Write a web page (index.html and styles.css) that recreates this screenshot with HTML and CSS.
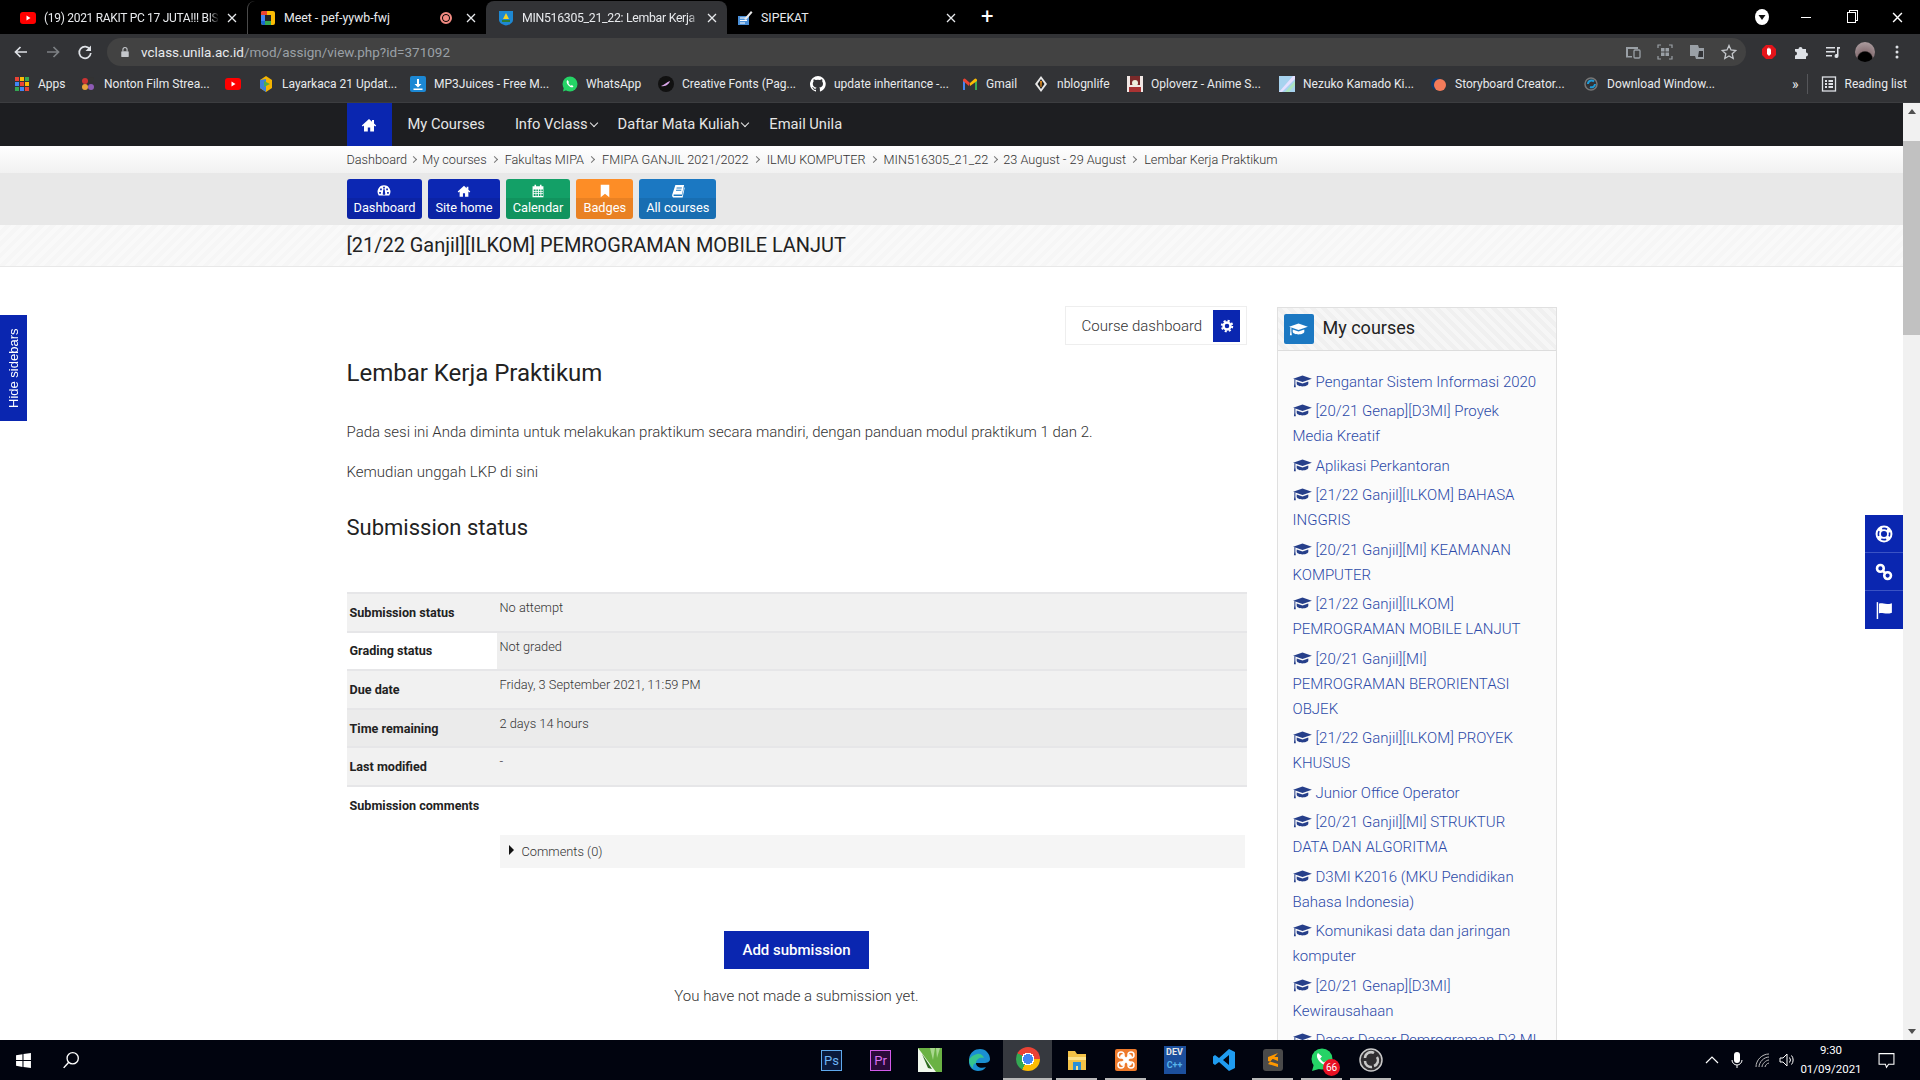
FILE: index.html
```html
<!DOCTYPE html>
<html lang="en">
<head>
    <meta charset="UTF-8">
    <meta name="viewport" content="width=device-width, initial-scale=1.0">
    <title>MIN516305_21_22: Lembar Kerja Praktikum</title>
    <link rel="stylesheet" href="styles.css">
</head>
<body>
    <svg class="icon-defs" width="0" height="0">
        <symbol id="i-home" viewBox="0 0 16 16"><path d="M8 2 .8 8.600l1 1L3 8.600V14.500h3.800v-4h2.400v4H13V8.600l1.200 1 1-1L13 6.600V3h-2v1.800z"/></symbol>
        <symbol id="i-cap" viewBox="0 0 20 16"><path d="M10 1.500 0 5l10 3.600L20 5z"/><path d="M3.800 8v2.500C3.800 12 6.500 13.300 10 13.300s6.200-1.300 6.200-2.800V8L10 10.200z"/><path d="M1.300 5.500h1.100v5l.5 3.500H.8l.5-3.500z"/></symbol>
        <symbol id="i-dash" viewBox="0 0 16 16"><path fill-rule="evenodd" d="M8 1.500a7.300 7.300 0 0 0-6 11.500h12A7.300 7.300 0 0 0 8 1.500zM7 3h2v2H7zM3.500 5h2v2h-2zm7 0h2v2h-2zM2.500 9h2v2h-2zm9 0h2v2h-2zM7.200 6h1.600l.5 4.500a1.400 1.400 0 1 1-2.600 0z"/></symbol>
        <symbol id="i-cal" viewBox="0 0 16 18"><path fill-rule="evenodd" d="M1 3h2.500V1h2v2h5V1h2v2H15v14H1zm1.500 4v2h2.400V7zm3.400 0v2h2V7zm3.200 0v2h2V7zm3.200 0v2h2V7zM2.500 10v2h2.400v-2zm3.400 0v2h2v-2zm3.200 0v2h2v-2zm3.200 0v2h2v-2zM2.500 13v2.500h2.400V13zm3.400 0v2.500h2V13zm3.200 0v2.500h2V13zm3.200 0v2.500h2V13z"/></symbol>
        <symbol id="i-mark" viewBox="0 0 16 18"><path d="M2.500 1h11v16L8 12.500 2.500 17z"/></symbol>
        <symbol id="i-book" viewBox="0 0 16 16"><path fill-rule="evenodd" d="M5 1h10l-2.500 11H3.800c-.8 0-1 .6-.9 1 .1.600.6.800 1 .8h8.800l2.300-10 .6.700L13.300 15.500H3.500C2 15.500 1 14 1.300 12.500zm1.500 3-.3 1.200h6l.3-1.200zm-.6 2.500-.3 1.200h6l.3-1.200z"/></symbol>
        <symbol id="i-link" viewBox="0 0 16 16"><g fill="none" stroke="currentColor" stroke-width="2.300"><circle cx="4.800" cy="4.800" r="3"/><circle cx="11.200" cy="11.200" r="3"/><path d="m6.500 6.500 3 3"/></g></symbol>
        <symbol id="i-flag" viewBox="0 0 16 16"><path d="M1.500 1h1.300v15H1.500z"/><path d="M3.500 2.500C6 1 9 4 15 2v8.500c-5.500 2-9-1-11.500.5z"/></symbol>
        <symbol id="i-ring" viewBox="0 0 16 16"><circle cx="8" cy="8" r="7.500" fill="currentColor"/><circle cx="8" cy="8" r="2.700" fill="#0a26b0"/><circle cx="8" cy="8" r="5" fill="none" stroke="#0a26b0" stroke-width="1.400" stroke-dasharray="4.500 3.354" stroke-dashoffset="2.250"/></symbol>
        <symbol id="i-close" viewBox="0 0 10 10"><path d="m1 1 8 8M9 1 1 9" fill="none" stroke="currentColor" stroke-width="1.300"/></symbol>
    </svg>

    <!-- browser tabs -->
    <div class="tabbar">
        <div class="tab">
            <svg class="fav" viewBox="0 0 16 16"><rect y="2" width="16" height="12" rx="3" fill="#f00"/><path d="m6.500 5.500 4 2.500-4 2.500z" fill="#fff"/></svg>
            <span class="tab-title tab-fade tab-tight">(19) 2021 RAKIT PC 17 JUTA!!! BIS</span>
            <svg class="tab-x"><use href="#i-close"/></svg>
        </div>
        <div class="tab tab-sep">
            <svg class="fav" viewBox="0 0 16 16"><rect x="1" y="1" width="14" height="14" rx="2" fill="#fbbc04"/><path d="M1 3a2 2 0 0 1 2-2h4v4H1z" fill="#ea4335"/><path d="M1 5h4v6H1z" fill="#4285f4"/><path d="M1 11h4v4H3a2 2 0 0 1-2-2z" fill="#1967d2"/><path d="M5 11h6v4H5z" fill="#34a853"/><rect x="5" y="5" width="6" height="6" fill="#202124"/></svg>
            <span class="tab-title">Meet - pef-yywb-fwj</span>
            <span class="rec"></span>
            <svg class="tab-x"><use href="#i-close"/></svg>
        </div>
        <div class="tab tab-active">
            <svg class="fav" viewBox="0 0 16 16"><path d="M1 1h14v9c0 3-4 5-7 5.500C5 15 1 13 1 10z" fill="#1e88d2"/><path d="M8 3 5 9h6z" fill="#f5d327"/><path d="M4 10h8v2H4z" fill="#2e7d32"/></svg>
            <span class="tab-title tab-fade tab-snug">MIN516305_21_22: Lembar Kerja</span>
            <svg class="tab-x"><use href="#i-close"/></svg>
        </div>
        <div class="tab tab-last">
            <svg class="fav" viewBox="0 0 16 16"><path d="M1 6h11v9H1z" fill="#4a90d9"/><path d="M3 8h7M3 10.500h7M3 13h5" stroke="#fff"/><path d="m7 9 7-8 1.500 1.500L9 10z" fill="#e8e8e8"/></svg>
            <span class="tab-title">SIPEKAT</span>
            <svg class="tab-x"><use href="#i-close"/></svg>
        </div>
        <span class="tab-plus">+</span>
        <div class="win-controls">
            <svg class="media-dot" viewBox="0 0 14 16"><ellipse cx="7" cy="8" rx="7" ry="8" fill="#fff"/><path d="M3.500 6h7L7 11z" fill="#111"/></svg>
            <span class="win-min"></span>
            <span class="win-max"></span>
            <svg class="win-x"><use href="#i-close"/></svg>
        </div>
    </div>

    <!-- address bar -->
    <div class="toolbar">
        <svg class="tool-btn" viewBox="0 0 16 16"><path d="M14 8H3M7.500 3 2.500 8l5 5" fill="none" stroke="#dee1e6" stroke-width="1.700"/></svg>
        <svg class="tool-btn" viewBox="0 0 16 16"><path d="M2 8h11M8.500 3l5 5-5 5" fill="none" stroke="#7d8084" stroke-width="1.700"/></svg>
        <svg class="tool-btn" viewBox="0 0 16 16"><path d="M13 5.500A5.800 5.800 0 1 0 13.800 9" fill="none" stroke="#dee1e6" stroke-width="1.700"/><path d="M14 1.500V7H8.500z" fill="#dee1e6"/></svg>
        <div class="omnibox">
            <svg class="lock" viewBox="0 0 12 14"><path d="M3.500 6V4a2.500 2.500 0 0 1 5 0v2" fill="none" stroke="#c4c7cb" stroke-width="1.300"/><rect x="1.500" y="6" width="9" height="7" rx="1" fill="#c4c7cb"/></svg>
            <span class="url">vclass.unila.ac.id<span class="url-path">/mod/assign/view.php?id=371092</span></span>
            <div class="omni-icons">
                <svg viewBox="0 0 16 16"><path d="M1 3h12v2H3v7h4v1.500H1z" fill="#9aa0a6"/><rect x="9" y="6" width="6" height="8" rx="1" fill="none" stroke="#9aa0a6" stroke-width="1.300"/></svg>
                <svg viewBox="0 0 16 16"><path d="M1 4V1h3M12 1h3v3M15 12v3h-3M4 15H1v-3" fill="none" stroke="#9aa0a6" stroke-width="1.200"/><path d="M4 4h3.500v3.500H4zm4.500 0H12v3.500H8.500zM4 8.500h3.500V12H4zm4.500 0H12V12H8.500z" fill="#9aa0a6"/></svg>
                <svg viewBox="0 0 16 16"><path d="M1 1h8l1 3h5v11H7l-1-3H1z" fill="#9aa0a6"/><path d="M10 7h4v6h-5z" fill="#323336"/></svg>
                <svg viewBox="0 0 16 16"><path d="m8 1.500 2 4.500 4.800.500-3.600 3.200 1 4.800L8 12l-4.200 2.500 1-4.800L1.200 6.500 6 6z" fill="none" stroke="#c4c7cb" stroke-width="1.300"/></svg>
            </div>
        </div>
        <div class="ext-icons">
            <svg viewBox="0 0 16 16"><path d="M5 1h6l4 4v6l-4 4H5l-4-4V5z" fill="#e4141a"/><path d="M6 5v5l2 2 2-2V4l-1 2V3.500L8 5V3L7 5V4z" fill="#fff"/></svg>
            <svg viewBox="0 0 16 16"><path d="M2 5h3.500a2 2 0 1 1 4 0H13v3.500a2 2 0 1 1 0 4V15H2v-3.500a2 2 0 1 0 0-4z" fill="#dee1e6"/></svg>
            <svg viewBox="0 0 16 16"><path d="M1 3h9v1.500H1zm0 4h9v1.500H1zm0 4h6v1.500H1zM12 3h3v1.800h-1.500V12a2 2 0 1 1-1.500-1.900z" fill="#dee1e6"/></svg>
            <span class="avatar"></span>
            <svg viewBox="0 0 16 16"><circle cx="8" cy="3" r="1.500" fill="#dee1e6"/><circle cx="8" cy="8" r="1.500" fill="#dee1e6"/><circle cx="8" cy="13" r="1.500" fill="#dee1e6"/></svg>
        </div>
    </div>

    <!-- bookmarks -->
    <div class="bookmarks">
        <a class="bm bm-apps"><svg class="fav" viewBox="0 0 16 16"><path d="M1 1h4v4H1z" fill="#ea4335"/><path d="M6 1h4v4H6z" fill="#fbbc04"/><path d="M11 1h4v4h-4z" fill="#34a853"/><path d="M1 6h4v4H1z" fill="#4285f4"/><path d="M6 6h4v4H6z" fill="#ea4335"/><path d="M11 6h4v4h-4z" fill="#fbbc04"/><path d="M1 11h4v4H1z" fill="#34a853"/><path d="M6 11h4v4H6z" fill="#4285f4"/><path d="M11 11h4v4h-4z" fill="#ea4335"/></svg>Apps</a>
        <a class="bm bm-first"><svg class="fav" viewBox="0 0 16 16"><circle cx="5" cy="5" r="3" fill="#c33"/><circle cx="11" cy="4" r="3" fill="#333"/><circle cx="5" cy="11" r="3" fill="#e9a23b"/><circle cx="11" cy="11" r="3" fill="#8e5bb5"/></svg>Nonton Film Strea...</a>
        <a class="bm bm-yt"><svg class="fav" viewBox="0 0 16 16"><rect y="2" width="16" height="12" rx="3" fill="#f00"/><path d="m6.500 5.500 4 2.500-4 2.500z" fill="#fff"/></svg></a>
        <a class="bm bm-long"><svg class="fav" viewBox="0 0 16 16"><path d="M8 0 14 4v8l-6 4-6-4V4z" fill="#f4b400"/><path d="M8 3 2 4v8l6 4z" fill="#3f7fd9"/><path d="m6 5 6 3-6 3z" fill="#4caf50"/></svg>Layarkaca 21 Updat...</a>
        <a class="bm bm-long"><svg class="fav" viewBox="0 0 16 16"><rect width="16" height="16" rx="2" fill="#1c88d4"/><path d="M7 3h2v5h2.500L8 11.500 4.500 8H7zM3.500 12.500h9V14h-9z" fill="#fff"/></svg>MP3Juices - Free M...</a>
        <a class="bm bm-wa"><svg class="fav" viewBox="0 0 16 16"><circle cx="8" cy="8" r="7.500" fill="#25d366"/><path d="M1 15.500 2 11l3 3z" fill="#25d366"/><path d="M5.500 4c-1.500 1-1 3.500 1 5.500s4 2.500 5 1L10 9l-1.200.8C7.800 9.300 6.800 8 6.400 7L7 6z" fill="#fff"/></svg>WhatsApp</a>
        <a class="bm bm-long"><svg class="fav" viewBox="0 0 16 16"><circle cx="8" cy="8" r="8" fill="#111"/><path d="M3 10c3-1 6-4 9-5-1 3-4 6-9 5z" fill="#d9a6e8"/></svg>Creative Fonts (Pag...</a>
        <a class="bm bm-long"><svg class="fav" viewBox="0 0 16 16"><path fill="#fff" fill-rule="evenodd" d="M8 0a8 8 0 0 0-2.500 15.600c.4.100.5-.2.500-.4v-1.400c-2.200.5-2.700-1-2.700-1-.4-.9-.9-1.200-.9-1.200-.7-.5.1-.5.1-.5.800.1 1.200.8 1.200.8.700 1.200 1.900.9 2.300.7.100-.5.300-.9.500-1.100-1.800-.2-3.700-.9-3.700-4 0-.9.300-1.600.8-2.100-.1-.2-.4-1 .1-2.100 0 0 .7-.2 2.200.8a7.600 7.600 0 0 1 4 0c1.500-1 2.200-.8 2.200-.8.400 1.100.2 1.900.1 2.100.5.600.8 1.300.8 2.100 0 3.100-1.900 3.700-3.700 3.900.3.300.6.800.6 1.500v2.200c0 .2.100.5.600.4A8 8 0 0 0 8 0z"/></svg>update inheritance -...</a>
        <a class="bm bm-gmail"><svg class="fav" viewBox="0 0 16 16"><path d="M1 14V4l2 1v9z" fill="#4285f4"/><path d="M13 14V5l2-1v10z" fill="#34a853"/><path d="M1 4a1.500 1.500 0 0 1 2.500-1L8 7l-1 3L1 5z" fill="#ea4335"/><path d="M15 4a1.500 1.500 0 0 0-2.500-1L8 7v3l7-5z" fill="#fbbc04"/></svg>Gmail</a>
        <a class="bm bm-nb"><svg class="fav" viewBox="0 0 16 16"><path d="m8 0 6 8-6 8-6-8z" fill="#e8e8e8"/><path d="m8 3 3.500 5L8 13 4.500 8z" fill="#222"/><path d="M7 5h2l-.5 6h-1z" fill="#e08a1e"/></svg>nblognlife</a>
        <a class="bm bm-long"><svg class="fav" viewBox="0 0 16 16"><rect width="16" height="16" fill="#f1e7e4"/><path d="M3 0h10v9H3z" fill="#7a2a2a"/><circle cx="8" cy="7" r="3" fill="#eed"/><path d="M2 11h12v5H2z" fill="#a33"/></svg>Oploverz - Anime S...</a>
        <a class="bm bm-long"><svg class="fav" viewBox="0 0 16 16"><rect width="16" height="16" fill="#a7d3ef"/><path d="M0 16 14 0h2v3L3 16z" fill="#e6e0ff"/><path d="M6 16 16 5v4l-6 7z" fill="#ace5bd"/></svg>Nezuko Kamado Ki...</a>
        <a class="bm bm-long"><svg class="fav" viewBox="0 0 16 16"><circle cx="6" cy="8" r="6" fill="#123a6b"/><circle cx="9" cy="9" r="6" fill="#f37b5a"/></svg>Storyboard Creator...</a>
        <a class="bm bm-long"><svg class="fav" viewBox="0 0 16 16"><circle cx="8" cy="8" r="6" fill="none" stroke="#777" stroke-width="1.500"/><path d="M5 8a3.500 3.500 0 0 1 6-2.500M12 8a3.500 3.500 0 0 1-5 3" fill="none" stroke="#1e9bd7" stroke-width="2"/></svg>Download Window...</a>
        <span class="bm-more">»</span>
        <a class="bm bm-read"><svg class="fav" viewBox="0 0 16 16"><rect x="1.500" y="1" width="13" height="14" fill="none" stroke="#dee1e6" stroke-width="1.300"/><path d="M4 4h2v2H4zm3.500 0H12v2H7.500zM4 7h2v2H4zm3.500 0H12v2H7.500zM4 10h2v2H4zm3.500 0H12v2H7.500z" fill="#dee1e6"/></svg>Reading list</a>
    </div>

    <div class="viewport">
        <div class="page">
            <nav class="topnav">
                <div class="container topnav-in">
                    <a class="nav-home"><svg class="ic"><use href="#i-home"/></svg></a>
                    <a class="nav-link nav-courses">My Courses</a>
                    <a class="nav-link nav-info">Info Vclass<span class="chev"></span></a>
                    <a class="nav-link nav-mk">Daftar Mata Kuliah<span class="chev"></span></a>
                    <a class="nav-link">Email Unila</a>
                </div>
            </nav>

            <div class="crumbs">
                <div class="container crumbs-in">
                    <a>Dashboard</a><i class="short"></i><a>My courses</a><i></i><a>Fakultas MIPA</a><i></i><a>FMIPA GANJIL 2021/2022</a><i></i><a>ILMU KOMPUTER</a><i></i><a>MIN516305_21_22</a><i class="short"></i><a>23 August - 29 August</a><i></i><a>Lembar Kerja Praktikum</a>
                </div>
            </div>

            <div class="quick">
                <div class="container quick-in">
                    <a class="qbtn q-blue"><span class="q-top"><svg class="ic"><use href="#i-dash"/></svg></span><span class="q-label">Dashboard</span></a>
                    <a class="qbtn q-blue"><span class="q-top"><svg class="ic"><use href="#i-home"/></svg></span><span class="q-label">Site home</span></a>
                    <a class="qbtn q-green"><span class="q-top"><svg class="ic"><use href="#i-cal"/></svg></span><span class="q-label">Calendar</span></a>
                    <a class="qbtn q-orange"><span class="q-top"><svg class="ic"><use href="#i-mark"/></svg></span><span class="q-label">Badges</span></a>
                    <a class="qbtn q-sky"><span class="q-top"><svg class="ic"><use href="#i-book"/></svg></span><span class="q-label">All courses</span></a>
                </div>
            </div>

            <div class="course-head">
                <div class="container"><h1>[21/22 Ganjil][ILKOM] PEMROGRAMAN MOBILE LANJUT</h1></div>
            </div>

            <div class="container layout">
                <main>
                    <div class="course-menu">
                        <div class="course-menu-box">
                            <span>Course dashboard</span>
                            <a class="gear-btn"><svg viewBox="0 0 16 16"><circle cx="8" cy="8" r="4" fill="none" stroke="#fff" stroke-width="2.800"/><circle cx="8" cy="8" r="6" fill="none" stroke="#fff" stroke-width="2.200" stroke-dasharray="2.400 2.310"/></svg></a>
                        </div>
                    </div>
                    <h2>Lembar Kerja Praktikum</h2>
                    <p class="intro">Pada sesi ini Anda diminta untuk melakukan praktikum secara mandiri, dengan panduan modul praktikum 1 dan 2.</p>
                    <p class="intro">Kemudian unggah LKP di sini</p>
                    <h3>Submission status</h3>

                    <table class="status">
                        <tr class="row-odd"><th>Submission status</th><td>No attempt</td></tr>
                        <tr class="row-even"><th>Grading status</th><td>Not graded</td></tr>
                        <tr class="row-odd"><th>Due date</th><td>Friday, 3 September 2021, 11:59 PM</td></tr>
                        <tr class="row-hover"><th>Time remaining</th><td>2 days 14 hours</td></tr>
                        <tr class="row-odd"><th>Last modified</th><td>-</td></tr>
                        <tr class="row-plain">
                            <th>Submission comments</th>
                            <td><div class="comments"><span class="tri"></span>Comments (0)</div></td>
                        </tr>
                    </table>

                    <div class="submit">
                        <a class="submit-btn">Add submission</a>
                        <p>You have not made a submission yet.</p>
                    </div>
                </main>

                <aside class="block">
                    <div class="block-head">
                        <span class="block-icon"><svg class="ic"><use href="#i-cap"/></svg></span>
                        <span class="block-title">My courses</span>
                    </div>
                    <ul class="course-list">
                        <li><svg class="ic"><use href="#i-cap"/></svg>Pengantar Sistem Informasi 2020</li>
                        <li><svg class="ic"><use href="#i-cap"/></svg>[20/21 Genap][D3MI] Proyek Media Kreatif</li>
                        <li><svg class="ic"><use href="#i-cap"/></svg>Aplikasi Perkantoran</li>
                        <li><svg class="ic"><use href="#i-cap"/></svg>[21/22 Ganjil][ILKOM] BAHASA INGGRIS</li>
                        <li><svg class="ic"><use href="#i-cap"/></svg>[20/21 Ganjil][MI] KEAMANAN KOMPUTER</li>
                        <li><svg class="ic"><use href="#i-cap"/></svg>[21/22 Ganjil][ILKOM] PEMROGRAMAN MOBILE LANJUT</li>
                        <li><svg class="ic"><use href="#i-cap"/></svg>[20/21 Ganjil][MI] PEMROGRAMAN BERORIENTASI OBJEK</li>
                        <li><svg class="ic"><use href="#i-cap"/></svg>[21/22 Ganjil][ILKOM] PROYEK KHUSUS</li>
                        <li><svg class="ic"><use href="#i-cap"/></svg>Junior Office Operator</li>
                        <li><svg class="ic"><use href="#i-cap"/></svg>[20/21 Ganjil][MI] STRUKTUR DATA DAN ALGORITMA</li>
                        <li><svg class="ic"><use href="#i-cap"/></svg>D3MI K2016 (MKU Pendidikan Bahasa Indonesia)</li>
                        <li><svg class="ic"><use href="#i-cap"/></svg>Komunikasi data dan jaringan komputer</li>
                        <li><svg class="ic"><use href="#i-cap"/></svg>[20/21 Genap][D3MI] Kewirausahaan</li>
                        <li><svg class="ic"><use href="#i-cap"/></svg>Dasar Dasar Pemrograman D3 MI</li>
                    </ul>
                </aside>
            </div>

            <a class="hide-tab">Hide sidebars</a>
            <div class="dock">
                <a><svg class="ic"><use href="#i-ring"/></svg></a>
                <a><svg class="ic"><use href="#i-link"/></svg></a>
                <a><svg class="ic"><use href="#i-flag"/></svg></a>
            </div>
        </div>

        <div class="scrollbar">
            <span class="sb-up"></span>
            <div class="sb-track"><span class="sb-thumb"></span></div>
            <span class="sb-down"></span>
        </div>
    </div>

    <!-- windows taskbar -->
    <div class="taskbar">
        <svg class="start" viewBox="0 0 16 16"><path d="m1 3 6-1v5.500H1zm7-1.200L15 1v6.500H8zM1 8.500h6V14l-6-1zm7 0h7V15l-7-1z" fill="#fff"/></svg>
        <svg class="search" viewBox="0 0 16 16"><circle cx="9.500" cy="6.500" r="5" fill="none" stroke="#fff" stroke-width="1.200"/><path d="m6 10-4.500 5" stroke="#fff" stroke-width="1.300"/></svg>

        <div class="apps">
            <span class="app"><span class="adobe adobe-ps">Ps</span></span>
            <span class="app"><span class="adobe adobe-pr">Pr</span></span>
            <span class="app"><svg viewBox="0 0 24 24"><rect x="0" y="0" width="24" height="24" fill="#6ab244"/><path d="M0 0 18 24H0z" fill="#fff" opacity=".9"/><path d="M12 0l3 12 2-12zM18 0l1 10 3-10z" fill="#a9d88e"/><path d="M4 6l10 15-4-1z" fill="#2c6b1e"/></svg></span>
            <span class="app"><svg viewBox="0 0 24 24"><path d="M2 11C3 4 8 1 13 1c6 0 10 5 10 10 0 3-3 4-6 4H9c0 4 5 6 10 4-2 3-5 4-8 4-5 0-9-4-9-9z" fill="#1a8fd1"/><path d="M9 15c0-4 4-6 8-5-1-3-4-5-7-4C6 7 3 9 2 12c0 3 2 7 5 9-2-2-1-5 2-6z" fill="#36c58e"/></svg></span>
            <span class="app app-on"><span class="chrome-ic"></span></span>
            <span class="app app-run"><svg viewBox="0 0 24 24"><path d="M3 3h7l2 3h9v16H3z" fill="#f3c247"/><path d="M3 9h18v3H3z" fill="#fde28a"/><path d="M8 14h8v8H8z" fill="#2a8fd8"/><path d="M11 18h2v4h-2z" fill="#fde28a"/></svg></span>
            <span class="app app-run"><svg viewBox="0 0 24 24"><rect x="1" y="1" width="22" height="22" rx="2" fill="#ee7a2b"/><path d="M12 12 7 7m5 5 5-5m-5 5-5 5m5-5 5 5" stroke="#fff" stroke-width="3.500"/><circle cx="7" cy="7" r="3" fill="none" stroke="#fff" stroke-width="1.500"/><circle cx="17" cy="7" r="3" fill="none" stroke="#fff" stroke-width="1.500"/><circle cx="7" cy="17" r="3" fill="none" stroke="#fff" stroke-width="1.500"/><circle cx="17" cy="17" r="3" fill="none" stroke="#fff" stroke-width="1.500"/></svg></span>
            <span class="app"><span class="dev-ic"><b>DEV</b><b class="dev-plus">C++</b></span></span>
            <span class="app"><svg viewBox="0 0 24 24"><path d="M17 1 23 4v16l-6 3L7 14l-4 3-2-1.500V8.500L3 7l4 3zM17 7l-6 5 6 5z" fill="#1f9cf0"/></svg></span>
            <span class="app app-run"><svg viewBox="0 0 24 24"><rect x="2" y="1" width="20" height="22" rx="3" fill="#4a4a4a"/><path d="M17 5 7 9v4l10 3v3L7 16M7 9l10 4V9z" fill="#ff9800"/></svg></span>
            <span class="app app-run app-wa"><svg viewBox="0 0 24 24"><circle cx="12" cy="11" r="10.500" fill="#25d366"/><path d="M2 23 4 16l5 5z" fill="#25d366"/><path d="M8 5C6 7 7 11 10 14s6.500 4 8.500 2L16 13l-2 1.500c-1.500-.8-3-2.500-3.800-4L12 8.500z" fill="#fff"/></svg><span class="wa-badge">66</span></span>
            <span class="app app-run"><svg viewBox="0 0 24 24"><circle cx="12" cy="12" r="11" fill="#302e31" stroke="#c9c9c9" stroke-width="1.500"/><path d="M6 10a6 6 0 0 1 9-5M18 9a6 6 0 0 1-3 9M13 19a6 6 0 0 1-7-6" fill="none" stroke="#c9c9c9" stroke-width="2.500"/></svg></span>
        </div>

        <div class="tray">
            <svg viewBox="0 0 16 16"><path d="m2 11 6-6 6 6" fill="none" stroke="#fff" stroke-width="1.200"/></svg>
            <svg viewBox="0 0 16 16"><rect x="5" y="0" width="6" height="11" rx="3" fill="#fff"/><path d="M3 8a5 5 0 0 0 10 0M8 13v3" fill="none" stroke="#fff"/></svg>
            <svg viewBox="0 0 16 16"><path d="M2 15C2 8 8 2 15 2M5 15c0-5 5-10 10-10M8 15c0-3 4-7 7-7M11 15c0-1 2-4 4-4" fill="none" stroke="#bbb"/></svg>
            <svg viewBox="0 0 16 16"><path d="M1 6h3l4-4v12l-4-4H1z" fill="none" stroke="#fff"/><path d="M10.500 5.500a4 4 0 0 1 0 5M12.500 3.500a7 7 0 0 1 0 9" fill="none" stroke="#fff"/></svg>
        </div>
        <div class="clock"><span>9:30</span><span>01/09/2021</span></div>
        <svg class="notif" viewBox="0 0 16 16"><path d="M1 1.500h14v10h-5l-2 3-1-3H1z" fill="none" stroke="#fff"/></svg>
    </div>
</body>
</html>
```

FILE: styles.css
```css
/* page frame */
* {
    box-sizing: border-box;
}

html, body {
    height: 100%;
}

body {
    margin: 0;
    display: flex;
    flex-direction: column;
    overflow: hidden;
    font-family: Roboto, "Liberation Sans", sans-serif;
    font-size: 14px;
    color: #333;
    background-color: #fff;
}

.icon-defs {
    position: absolute;
}

.ic {
    width: 14px;
    height: 14px;
    fill: currentColor;
}

.fav {
    flex: none;
    width: 16px;
    height: 16px;
}

/* browser tabs */
.tabbar {
    flex: none;
    display: flex;
    align-items: flex-end;
    height: 34px;
    padding-left: 8px;
    background-color: #000;
    color: #e8eaed;
    font-size: 12.300px;
}

.tab {
    display: flex;
    align-items: center;
    width: 239px;
    height: 33px;
    padding: 0 10px 0 12px;
    gap: 8px;
    border-radius: 8px 8px 0 0;
}

.tab-sep {
    border-left: 1px solid #4a4a4a;
}

.tab-active {
    width: 241px;
    background-color: #323336;
}

.tab-last {
    padding-left: 10px;
}

.tab-title {
    flex: 1;
    overflow: hidden;
    white-space: nowrap;
}

.tab-fade {
    -webkit-mask-image: linear-gradient(to right, #000 calc(100% - 10px), transparent);
    mask-image: linear-gradient(to right, #000 calc(100% - 10px), transparent);
}

.tab-tight {
    font-size: 12px;
    letter-spacing: -0.3px;
}

.tab-snug {
    letter-spacing: -0.3px;
}

.tab-x {
    flex: none;
    width: 10px;
    height: 10px;
    color: #e8eaed;
}

.rec {
    flex: none;
    width: 12px;
    height: 12px;
    margin-right: 6px;
    border-radius: 50%;
    border: 2px solid #f28b82;
    background-color: #f28b82;
    box-shadow: inset 0 0 0 1px #000;
}

.tab-plus {
    margin: 0 0 5px 15px;
    font-size: 22px;
    line-height: 24px;
    color: #fff;
}

.win-controls {
    display: flex;
    align-items: center;
    height: 34px;
    margin-left: auto;
    padding-right: 17px;
}

.media-dot {
    width: 14px;
    height: 16px;
    margin-right: 32px;
}

.win-min {
    width: 10px;
    height: 1px;
    margin-right: 36px;
    background-color: #fff;
}

.win-max {
    width: 9px;
    height: 11px;
    margin-right: 36px;
    border: 1px solid #fff;
    box-shadow: 2px -2px 0 -1px #000, 2px -2px 0 0 #fff;
}

.win-x {
    width: 11px;
    height: 11px;
    color: #fff;
}

/* address bar */
.toolbar {
    flex: none;
    display: flex;
    align-items: center;
    height: 34px;
    padding: 2px 0 0 13px;
    background-color: #323336;
}

.tool-btn {
    width: 16px;
    height: 16px;
    margin-right: 16px;
}

.tool-btn:nth-child(3) {
    margin-right: 14px;
}

.omnibox {
    display: flex;
    align-items: center;
    width: 1639px;
    height: 28px;
    padding: 0 9px 0 13px;
    border-radius: 14px;
    background-color: #424242;
    color: #e8eaed;
}

.lock {
    width: 10px;
    height: 12px;
    margin-right: 11px;
}

.url {
    font-size: 13.500px;
}

.url-path {
    color: #9aa0a6;
}

.omni-icons {
    display: flex;
    gap: 16px;
    margin-left: auto;
}

.omni-icons svg {
    width: 16px;
    height: 16px;
}

.ext-icons {
    display: flex;
    align-items: center;
    gap: 16px;
    margin-left: 15px;
}

.ext-icons svg {
    width: 16px;
    height: 16px;
}

.avatar {
    width: 20px;
    height: 20px;
    margin: 0 -2px;
    border-radius: 50%;
    background: radial-gradient(circle at 50% 85%, #000 35%, #8a7478 42%, #b5a8aa 100%);
}

/* bookmarks */
.bookmarks {
    flex: none;
    display: flex;
    align-items: center;
    height: 35px;
    padding: 0 0 3px 14px;
    background-color: #323336;
    border-bottom: 1px solid #3c3d40;
    color: #e8eaed;
    font-size: 12px;
}

.bm {
    display: flex;
    align-items: center;
    gap: 8px;
    white-space: nowrap;
    overflow: hidden;
}

.bm-apps {
    width: 66px;
}

.bm-first {
    width: 145px;
}

.bm-long {
    width: 152px;
}

.bm-yt {
    width: 33px;
}

.bm-wa {
    width: 96px;
}

.bm-gmail {
    width: 71px;
}

.bm-nb {
    width: 94px;
}

.bm-more {
    margin-left: 57px;
    padding-right: 8px;
    border-right: 1px solid #55565a;
    font-size: 14px;
    line-height: 20px;
}

.bm-read {
    margin-left: 13px;
}

/* page */
.viewport {
    flex: 1;
    display: flex;
    min-height: 0;
}

.page {
    position: relative;
    flex: 1;
    min-width: 0;
    overflow: hidden;
}

.container {
    width: 1210px;
    margin: 0 auto;
}

.scrollbar {
    flex: none;
    display: flex;
    flex-direction: column;
    width: 17px;
    background-color: #f1f1f1;
}

.sb-track {
    flex: 1;
    padding-top: 21px;
}

.sb-thumb {
    display: block;
    height: 194px;
    background-color: #c1c1c1;
}

.sb-up, .sb-down {
    align-self: center;
    width: 0;
    height: 0;
    margin: 6px 0;
    border-left: 4px solid transparent;
    border-right: 4px solid transparent;
}

.sb-up {
    border-bottom: 5px solid #505050;
}

.sb-down {
    border-top: 5px solid #505050;
}

/* top nav */
.topnav {
    height: 43px;
    background-color: #1d1e21;
    color: #e6e6e6;
    font-size: 14.700px;
}

.topnav-in {
    display: flex;
    align-items: center;
    height: 43px;
}

.nav-link {
    padding-bottom: 1px;
}

.nav-home {
    display: flex;
    align-items: center;
    justify-content: center;
    width: 45px;
    height: 43px;
    margin-right: 16px;
    background-color: #0a26b0;
    color: #fff;
}

.nav-home .ic {
    width: 16px;
    height: 16px;
}

.nav-courses {
    margin-right: 30px;
}

.nav-info {
    margin-right: 20px;
}

.nav-mk {
    margin-right: 20px;
}

.chev {
    display: inline-block;
    width: 6px;
    height: 6px;
    margin: 0 1px 3px 3px;
    border-right: 1px solid #e6e6e6;
    border-bottom: 1px solid #e6e6e6;
    transform: rotate(45deg);
}

/* breadcrumb */
.crumbs {
    height: 27px;
    background: linear-gradient(#fff, #f1f1f1);
    font-size: 12.700px;
    font-weight: 300;
    color: #333;
}

.crumbs-in {
    display: flex;
    align-items: center;
    height: 27px;
}

.crumbs i {
    width: 5px;
    height: 5px;
    margin: 0 8px 0 5px;
    border-top: 1px solid #777;
    border-right: 1px solid #777;
    transform: rotate(45deg);
}

.crumbs .short {
    margin: 0 6px 0 4px;
}

/* quick links */
.quick {
    height: 52px;
    background-color: #e8e8e8;
}

.quick-in {
    display: flex;
    gap: 6px;
    padding-top: 6px;
}

.qbtn {
    display: flex;
    flex-direction: column;
    height: 40px;
    border-radius: 3px;
    overflow: hidden;
    color: #fff;
    font-size: 12.800px;
    text-align: center;
}

.q-top {
    height: 19px;
    padding-top: 5px;
}

.q-label {
    flex: 1;
    padding: 0 7px;
    line-height: 20px;
    background-color: rgba(0, 0, 0, 0.08);
}

.q-blue {
    background-color: #0c27b3;
}

.q-green {
    background-color: #13a067;
}

.q-orange {
    background-color: #fd8d26;
}

.q-sky {
    background-color: #1b78c2;
}

/* course title band */
.course-head {
    height: 42px;
    border-bottom: 1px solid #e8e8e8;
    background: repeating-linear-gradient(135deg, #f9f9f9 0, #f9f9f9 4px, #f6f6f6 4px, #f6f6f6 8px);
}

.course-head h1 {
    margin: 0;
    font-size: 19.950px;
    font-weight: 400;
    line-height: 40px;
    color: #222;
}

/* two columns */
.layout {
    display: grid;
    grid-template-columns: 900px 280px;
    gap: 30px;
    padding-top: 39px;
}

.course-menu {
    display: flex;
    justify-content: flex-end;
}

.course-menu-box {
    display: flex;
    align-items: center;
    gap: 11px;
    width: 182px;
    height: 39px;
    padding: 0 5px 0 16px;
    border: 1px solid #eee;
    font-size: 15px;
    font-weight: 300;
    color: #333;
}

.gear-btn {
    display: flex;
    flex: none;
    align-items: center;
    justify-content: center;
    width: 27px;
    height: 32px;
    background-color: #0a26b0;
}

.gear-btn svg {
    width: 14px;
    height: 14px;
}

main h2 {
    margin: 14px 0 35px;
    font-size: 24px;
    font-weight: 400;
    line-height: 28px;
    color: #222;
}

.intro {
    margin: 0 0 19px;
    font-size: 15px;
    font-weight: 300;
    line-height: 21px;
}

main h3 {
    margin: 32px 0 51px;
    font-size: 22px;
    font-weight: 400;
    line-height: 26px;
    color: #222;
}

/* submission table */
.status {
    width: 900px;
    border-collapse: collapse;
    font-size: 12.800px;
}

.status tr {
    height: 38.600px;
    border-top: 2px solid #e6e6e8;
}

.status th {
    width: 150px;
    padding: 0 3px;
    text-align: left;
    font-size: 12.600px;
    font-weight: 700;
    color: #222;
}

.status td {
    padding: 6px 3px 4px;
    vertical-align: top;
    font-weight: 300;
    color: #333;
}

.row-odd th, .row-odd td {
    background-color: #f1f1f1;
}

.row-even td {
    background-color: #eeeeee;
}

.row-hover th, .row-hover td {
    background-color: #ebebeb;
}

.status .row-plain {
    vertical-align: top;
}

.status .row-plain th {
    padding-top: 11px;
}

.status .row-plain td {
    padding: 48px 2px 0 3px;
}

.comments {
    position: relative;
    display: flex;
    align-items: center;
    height: 33px;
    padding-left: 22px;
    background-color: #f5f5f5;
}

.tri {
    position: absolute;
    left: 9px;
    top: 10px;
    border-top: 5px solid transparent;
    border-bottom: 5px solid transparent;
    border-left: 5px solid #111;
}

.submit {
    padding-top: 63px;
    text-align: center;
}

.submit-btn {
    display: inline-block;
    width: 145px;
    height: 38px;
    background-color: #0a26b0;
    color: #fff;
    font-size: 15px;
    font-weight: 500;
    line-height: 38px;
}

.submit p {
    margin: 18px 0 0;
    font-size: 15px;
    font-weight: 300;
}

/* my courses block */
.block {
    align-self: start;
    margin-top: 1px;
    padding-bottom: 40px;
    border: 1px solid #e0e0e0;
    background-color: #fbfbfb;
}

.block-head {
    display: flex;
    align-items: center;
    gap: 9px;
    height: 43px;
    padding-left: 6px;
    border-bottom: 1px solid #ddd;
    background: repeating-linear-gradient(45deg, #f6f6f6 0, #f6f6f6 4px, #f0f0f0 4px, #f0f0f0 8px);
    font-size: 18px;
    color: #222;
}

.block-title {
    padding-bottom: 3px;
}

.block-icon {
    display: flex;
    align-items: center;
    justify-content: center;
    width: 30px;
    height: 30px;
    border-radius: 2px;
    background-color: #1b78c2;
    color: #fff;
}

.block-icon .ic {
    width: 19px;
    height: 15px;
}

.course-list {
    margin: 0;
    padding: 18.500px 15px 0;
    list-style-type: none;
    font-size: 15px;
    font-weight: 300;
    line-height: 25px;
    color: #2c4aa8;
}

.course-list li {
    margin-bottom: 4.500px;
}

.course-list .ic {
    width: 19px;
    height: 15px;
    margin-right: 4px;
    vertical-align: -2px;
    color: #263f8a;
}

/* overlays on the page */
.hide-tab {
    position: absolute;
    left: 0;
    top: 212px;
    display: flex;
    align-items: center;
    justify-content: center;
    width: 27px;
    height: 106px;
    background-color: #0a26b0;
    color: #fff;
    font-family: "Liberation Sans", sans-serif;
    font-size: 13px;
    writing-mode: vertical-rl;
    transform: rotate(180deg);
}

.dock {
    position: absolute;
    right: 0;
    top: 412px;
    display: flex;
    flex-direction: column;
    width: 38px;
    background-color: #0a26b0;
    color: #fff;
}

.dock a {
    display: flex;
    align-items: center;
    justify-content: center;
    height: 38px;
    border-bottom: 1px solid #3a52c4;
}

.dock a:last-child {
    border-bottom: none;
}

.dock .ic {
    width: 18px;
    height: 18px;
}

/* taskbar */
.taskbar {
    flex: none;
    display: flex;
    align-items: center;
    height: 40px;
    background-color: #01040f;
    color: #fff;
}

.start {
    width: 17px;
    height: 17px;
    margin-left: 15px;
}

.search {
    width: 18px;
    height: 18px;
    margin-left: 30px;
}

.apps {
    display: flex;
    margin-left: 727px;
}

.app {
    position: relative;
    display: flex;
    align-items: center;
    justify-content: center;
    width: 49px;
    height: 40px;
}

.app svg {
    width: 24px;
    height: 24px;
}

.app-on {
    background-color: #36393f;
    border-bottom: 2px solid #b8b8b8;
}

.app-run::after {
    content: "";
    position: absolute;
    left: 4px;
    right: 4px;
    bottom: 0;
    height: 2px;
    background-color: #b8b8b8;
}

.adobe {
    display: block;
    width: 21px;
    height: 21px;
    border: 1px solid;
    font-size: 13px;
    line-height: 19px;
    text-align: center;
}

.adobe-ps {
    border-color: #5fa9ec;
    background-color: #0a1a3c;
    color: #6db5f5;
}

.adobe-pr {
    border-color: #d25ae8;
    background-color: #2a0a3a;
    color: #d970f0;
}

.chrome-ic {
    width: 24px;
    height: 24px;
    border-radius: 50%;
    background:
        radial-gradient(circle, #4285f4 0 5px, #fff 5px 6.500px, transparent 6.500px),
        conic-gradient(#ea4335 0 90deg, #fbbc04 90deg 210deg, #34a853 210deg 300deg, #ea4335 300deg);
}

.dev-ic {
    display: flex;
    flex-direction: column;
    align-items: center;
    width: 22px;
    height: 28px;
    background-color: #1c4f9c;
    color: #e8e8e8;
    font-size: 9px;
    line-height: 13px;
}

.dev-plus {
    color: #58b3ea;
}

.wa-badge {
    position: absolute;
    left: 26px;
    top: 19px;
    width: 17px;
    height: 17px;
    border-radius: 50%;
    background-color: #e81123;
    font-size: 10px;
    line-height: 17px;
    text-align: center;
}

.tray {
    display: flex;
    align-items: center;
    gap: 9px;
    margin-left: auto;
}

.tray svg {
    width: 16px;
    height: 16px;
}

.clock {
    display: flex;
    flex-direction: column;
    align-items: center;
    width: 72px;
    font-size: 11.500px;
    line-height: 19px;
}

.notif {
    width: 17px;
    height: 17px;
    margin: 0 25px 0 11px;
}
```
